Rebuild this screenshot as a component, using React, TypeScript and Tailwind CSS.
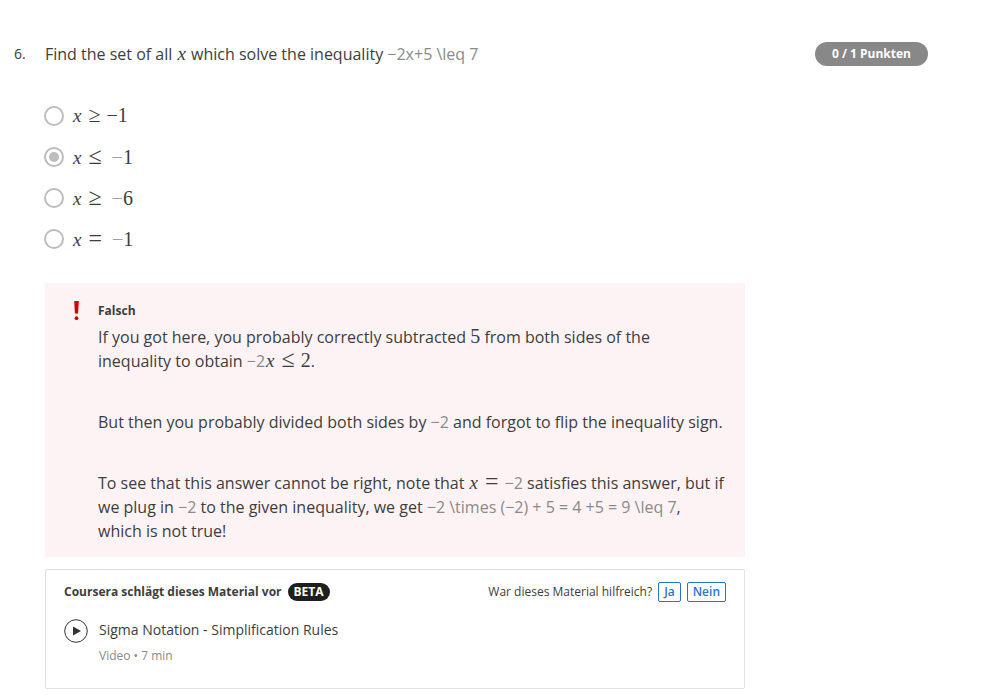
import type { ReactNode } from 'react';

const MATH = 'font-["Liberation_Serif",serif] leading-4';

function Variable() {
  return <i className={`${MATH} mx-px text-[19px]`}>x</i>;
}

function Num({ children }: { children: ReactNode }) {
  return <span className={`${MATH} text-[20px]`}>{children}</span>;
}

function Relation({ children, small }: { children: ReactNode; small?: boolean }) {
  return (
    <span className={`${MATH} ${small ? 'mx-1.5 text-[22px]' : 'mx-1.5 text-[24px]'}`}>{children}</span>
  );
}

function Raw({ children }: { children: ReactNode }) {
  return <span className="text-[#8a8a8a]">{children}</span>;
}

const options = [
  { id: 'a', relation: '≥', value: '1', small: true },
  { id: 'b', relation: '≤', value: '1', small: false },
  { id: 'c', relation: '≥', value: '6', small: false },
  { id: 'd', relation: '=', value: '1', small: false },
];

function Options() {
  return (
    <fieldset aria-label="Antwort" className="mt-[38px] flex flex-col gap-[17px]">
      {options.map((o) => (
        <label key={o.id} htmlFor={o.id} className="flex h-6 items-center gap-2">
          <input
            id={o.id}
            type="radio"
            name="answer"
            defaultChecked={o.id === 'b'}
            className="-ml-px size-5 shrink-0 appearance-none rounded-full border-2 border-[#bdbdbd] bg-white bg-clip-content p-[3px] checked:bg-[#bdbdbd]"
          />
          <span className="flex h-[18px] items-baseline whitespace-nowrap">
            <Variable />
            <Relation small={o.small}>{o.relation}</Relation>
            <span className={o.small ? `${MATH} text-[20px]` : `${MATH} ml-1 text-[20px] text-[#a0a0a0]`}>−</span>
            <Num>{o.value}</Num>
          </span>
        </label>
      ))}
    </fieldset>
  );
}

function Feedback() {
  return (
    <section className="mt-8 flex gap-[18px] bg-[#fef3f4] pt-[18px] pr-[19px] pb-[14px] pl-7">
      <svg className="h-5 w-[7px] shrink-0" viewBox="0 0 7 20" fill="#d30001" aria-hidden="true">
        <path d="M1.2 0h4.6l-.7 12.5H1.9z" />
        <circle cx="3.5" cy="17.2" r="1.9" />
      </svg>
      <div>
        <h2 className="text-[12px] leading-5 font-bold">Falsch</h2>
        <div className="mt-1 flex flex-col gap-[37px] text-base leading-6">
          <p>
            If you got here, you probably correctly subtracted <Num>5</Num> from both sides of the inequality to obtain{' '}
            <span className="whitespace-nowrap">
              <Raw>−2</Raw>
              <Variable />
              <Relation>≤</Relation>
              <Num>2</Num>.
            </span>
          </p>
          <p>
            But then you probably divided both sides by <Raw>−2</Raw> and forgot to flip the inequality sign.
          </p>
          <p>
            To see that this answer cannot be right, note that <Variable />
            <Relation>=</Relation>
            <Raw>−2</Raw> satisfies this answer, but if we plug in <Raw>−2</Raw> to the given inequality, we get{' '}
            <Raw>−2 \times (−2) + 5 = 4 +5 = 9 \leq 7</Raw>, which is not true!
          </p>
        </div>
      </div>
    </section>
  );
}

function VoteButton({ children }: { children: ReactNode }) {
  return (
    <button type="button" className="h-5 rounded-[2px] border border-[#2a73cc] px-[5px] text-[12px] leading-4 font-semibold text-[#2a73cc]">
      {children}
    </button>
  );
}

function Suggestion() {
  return (
    <section className="mt-3 rounded-[2px] border border-[#e1e1e1] px-[18px] pt-3 pb-[22px]">
      <div className="flex items-center justify-between">
        <h2 className="flex items-center gap-1.5 text-[12px] leading-5 font-bold">
          Coursera schlägt dieses Material vor
          <span className="rounded-full bg-[#1f1f1f] px-1.5 leading-[18px] text-white">BETA</span>
        </h2>
        <div className="flex items-center gap-1.5 text-[12px] leading-5">
          War dieses Material hilfreich?
          <VoteButton>Ja</VoteButton>
          <VoteButton>Nein</VoteButton>
        </div>
      </div>
      <a href="#video" className="mt-4 flex gap-[11px]">
        <svg className="mt-px size-6 shrink-0" viewBox="0 0 24 24" aria-hidden="true">
          <circle cx="12" cy="12" r="11.3" fill="none" stroke="#333" />
          <path d="M9 7.5v9l8-4.5z" fill="#333" />
        </svg>
        <span>
          <span className="block text-[14px] leading-6">Sigma Notation - Simplification Rules</span>
          <span className="mt-1 block text-[12px] leading-5 text-[#8a8a8a]">Video • 7 min</span>
        </span>
      </a>
    </section>
  );
}

export default function App() {
  return (
    <main className='grid grid-cols-[31px_minmax(0,700px)_auto] justify-start bg-white px-[14px] pt-[42px] font-["Open_Sans",sans-serif] text-[#3d3d3d]'>
      <span className="text-[14px] leading-6">6.</span>
      <div>
        <p className="text-base leading-6">
          Find the set of all <Variable /> which solve the inequality <Raw>−2x+5 \leq 7</Raw>
        </p>
        <Options />
        <Feedback />
        <Suggestion />
      </div>
      <div className="ml-[70px]">
        <span className="block rounded-full bg-[#888888] px-[17px] text-[12px] leading-6 font-bold whitespace-nowrap text-white">
          0 / 1 Punkten
        </span>
      </div>
    </main>
  );
}
